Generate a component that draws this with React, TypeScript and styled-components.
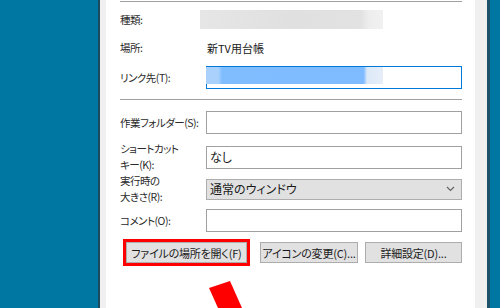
import React from "react"
import styled, { createGlobalStyle } from "styled-components"

const GlobalStyle = createGlobalStyle`
  html, body {
    margin: 0;
    padding: 0;
    width: 500px;
    height: 308px;
    overflow: hidden;
    background-color: #0077a2;
  }
  body {
    font-family: "Noto Sans CJK JP", "Noto Sans", sans-serif;
    font-feature-settings: "palt";
    font-size: 11px;
    color: #1a1a1a;
  }
`

interface rowType{
  label: string[],
  children?: React.ReactNode,
  height: number,
  top: number
}
function Row({label, children, height, top}: rowType){
  return(
    <FieldRow height={height} top={top}>
      <Label>{label.map(l => <span key={l}>{l}</span>)}</Label>
      {children}
    </FieldRow>
  )
}

export default function App(){
  return(
    <Page>
      <GlobalStyle />
      <Desktop side="left" />
      <Window>
        <Panel>
          <Separator top={1} />
          <Row label={["種類:"]} height={19} top={8}>
            <BlurBox />
          </Row>
          <Row label={["場所:"]} height={18} top={10}>
            <Value>新TV用台帳</Value>
          </Row>
          <Row label={["リンク先(T):"]} height={23} top={9}>
            <TextBox focused>
              <Selection />
            </TextBox>
          </Row>
          <Separator top={10} />
          <Row label={["作業フォルダー(S):"]} height={23} top={11}>
            <TextBox />
          </Row>
          <Row label={["ショートカット", "キー(K):"]} height={32} top={7}>
            <TextBox><InputText>なし</InputText></TextBox>
          </Row>
          <Row label={["実行時の", "大きさ(R):"]} height={32} top={0}>
            <Select>
              <InputText>通常のウィンドウ</InputText>
              <svg width="9" height="6" viewBox="0 0 9 6">
                <path d="M1 1 L4.5 4.5 L8 1" fill="none" stroke="#606060" strokeWidth="1.1" />
              </svg>
            </Select>
          </Row>
          <Row label={["コメント(O):"]} height={23} top={4}>
            <TextBox />
          </Row>
          <Buttons>
            <Highlight>
              <Button width={121}>ファイルの場所を開く(F)</Button>
            </Highlight>
            <Button width={98}>アイコンの変更(C)...</Button>
            <Button width={97}>詳細設定(D)...</Button>
          </Buttons>
        </Panel>
      </Window>
      <Desktop side="right" />
      <Arrow width="500" height="308" viewBox="0 0 500 308">
        <polygon points="209,288 230,281 242,308 218,308" fill="#ff0000" />
      </Arrow>
    </Page>
  )
}

const Page = styled.div`
  position: relative;
  display: flex;
  width: 500px;
  height: 308px;
  overflow: hidden;
`

interface sideType{
  side: string
}
const Desktop = styled.div<sideType>`
  flex: ${props => props.side === "left" ? "0 0 98px" : "1"};
  background-color: #0077a2;
`

const Window = styled.div`
  display: flex;
  flex: none;
  width: 377px;
  height: 308px;
  padding: 0 8px 0 2px;
  background-color: #f0f0f0;
  border-left: 2px solid #1b4a5c;
  border-right: 3px solid #1d5369;
`

const Panel = styled.div`
  display: flex;
  flex-direction: column;
  width: 369px;
  margin-left: 4px;
  padding: 0 13px 0 14px;
  box-sizing: border-box;
  background-color: #ffffff;
`

interface topType{
  top: number
}
const Separator = styled.div<topType>`
  height: 1px;
  margin-top: ${props => props.top}px;
  background-color: #a0a0a0;
`

interface rowStyle{
  height: number,
  top: number
}
const FieldRow = styled.div<rowStyle>`
  display: grid;
  grid-template-columns: 86px 256px;
  align-items: center;
  height: ${props => props.height}px;
  margin-top: ${props => props.top}px;
`

const Label = styled.div`
  display: flex;
  flex-direction: column;
  font-size: 10.5px;
  line-height: 16px;
  letter-spacing: -0.5px;
  white-space: nowrap;
  color: #2a2a2a;
`

const Value = styled.div`
  padding-left: 1px;
  line-height: 18px;
`

const BlurBox = styled.div`
  width: 183px;
  height: 19px;
  margin-left: -6px;
  background: linear-gradient(90deg, #e6e6e6 0%, #e0e0e0 50%, #e2e2e2 88%, #ededed 92%, #f1f1f1 100%);
  filter: blur(0.6px);
`

interface boxType{
  focused?: boolean
}
const TextBox = styled.div<boxType>`
  display: flex;
  align-items: ${props => props.focused ? "flex-start" : "center"};
  height: 23px;
  box-sizing: border-box;
  border: 1px solid ${props => props.focused ? "#0078d7" : "#a0a0a0"};
  background-color: #ffffff;
`

const Selection = styled.div`
  width: 177px;
  height: 17px;
  margin-left: -1px;
  background: linear-gradient(90deg, #a9d1fb 0%, #a9d1fb 7%, #80bdff 9%, #7fbbff 89%, #dce9f7 91%, #e6eef8 100%);
  filter: blur(0.5px);
`

const InputText = styled.span`
  padding-left: 3px;
  font-size: 12px;
  line-height: 18px;
  white-space: nowrap;
`

const Select = styled.div`
  display: flex;
  align-items: center;
  justify-content: space-between;
  height: 21px;
  padding-right: 6px;
  box-sizing: border-box;
  border: 1px solid #adadad;
  background-color: #e1e1e1;
`

const Buttons = styled.div`
  display: flex;
  align-items: center;
  gap: 7px;
  margin-top: 7px;
  padding-left: 3px;
`

const Highlight = styled.div`
  display: flex;
  margin-right: 3px;
  border: 3px solid #ff0000;
`

interface buttonType{
  width: number
}
const Button = styled.button<buttonType>`
  width: ${props => props.width}px;
  height: 21px;
  padding: 0;
  box-sizing: border-box;
  border: 1px solid #adadad;
  background-color: #e1e1e1;
  font-family: inherit;
  font-feature-settings: "palt";
  font-size: 11px;
  letter-spacing: -0.2px;
  color: #1a1a1a;
  white-space: nowrap;
`

const Arrow = styled.svg`
  position: absolute;
  left: 0;
  top: 0;
  pointer-events: none;
`
